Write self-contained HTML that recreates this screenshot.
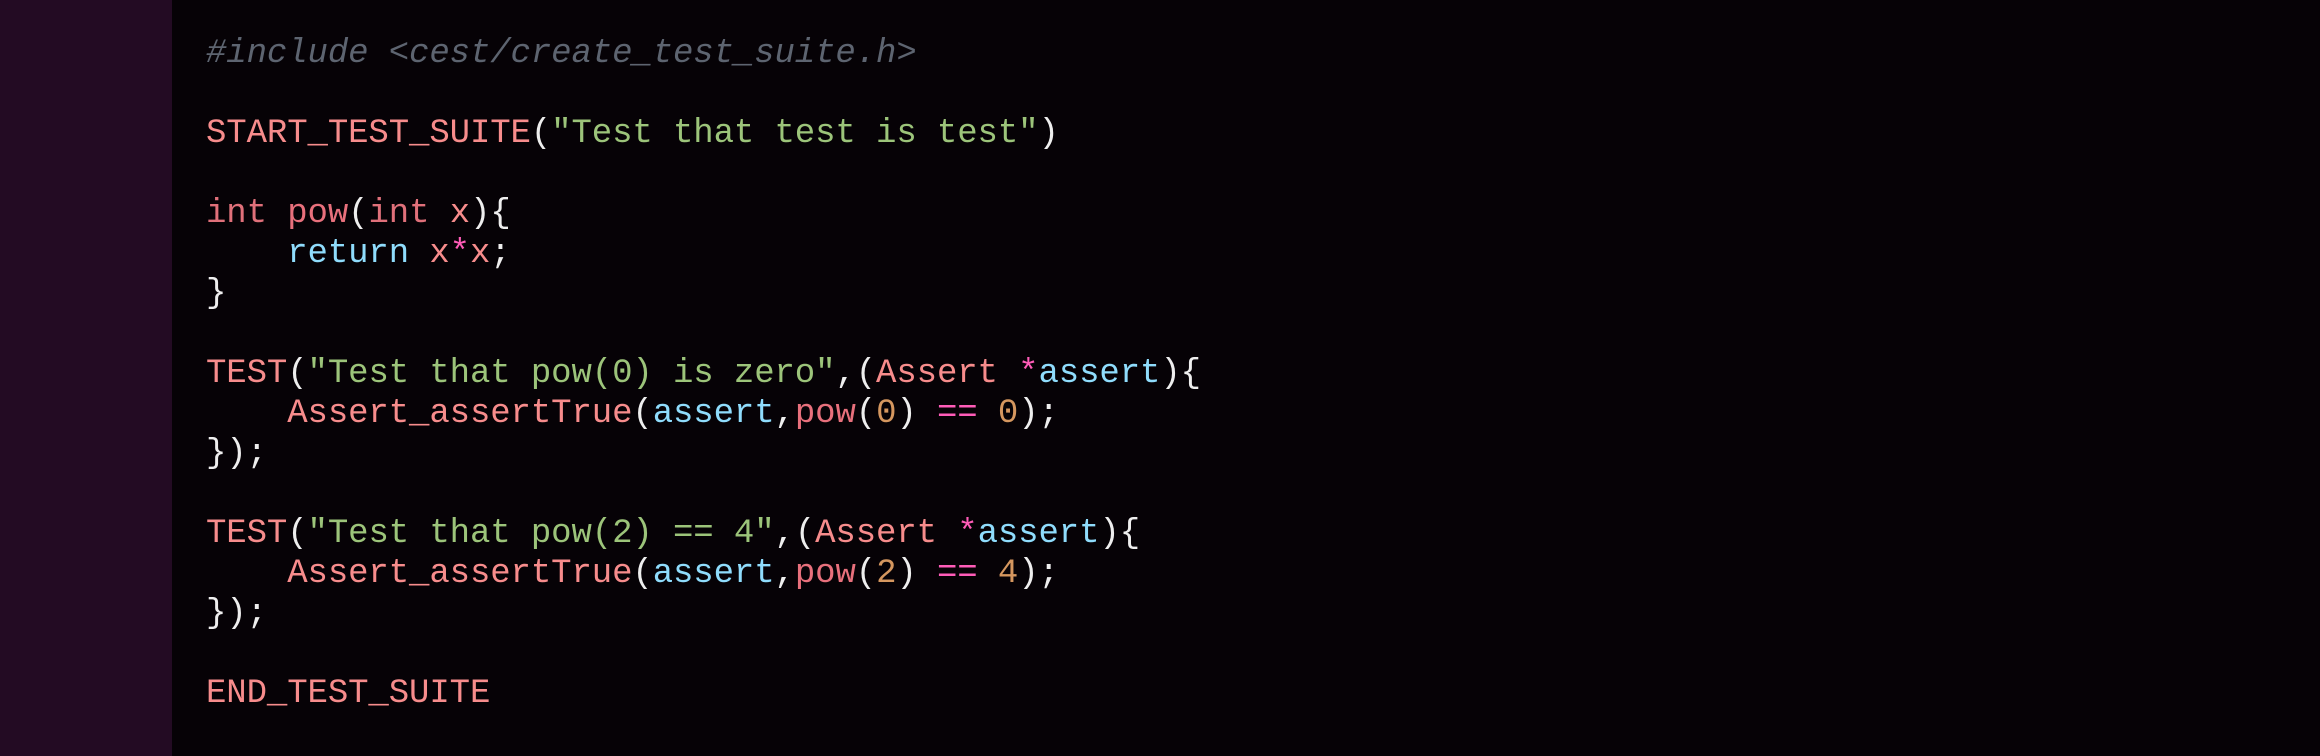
<!DOCTYPE html>
<html><head><meta charset="utf-8"><style>
html,body{margin:0;padding:0}
body{width:2320px;height:756px;background:#060206;position:relative;overflow:hidden}
.side{position:absolute;left:0;top:0;width:172px;height:756px;background:#230b23}
pre{position:absolute;left:206px;top:34px;margin:0;font-family:"Liberation Mono",monospace;font-size:34px;line-height:40px;color:#eeeeee;letter-spacing:-0.1px}
.c{color:#5d6470;font-style:italic}
.m{color:#f78c8c}
.s{color:#9cc47a}
.k{color:#e0707a}
.f{color:#e8707c}
.b{color:#8fdcfc}
.p{color:#ff5cb8}
.n{color:#d5975f}
</style></head><body>
<div class="side"></div>
<pre><span class="c">#include &lt;cest/create_test_suite.h&gt;</span>

<span class="m">START_TEST_SUITE</span>(<span class="s">"Test that test is test"</span>)

<span class="k">int</span> <span class="f">pow</span>(<span class="k">int</span> <span class="m">x</span>){
    <span class="b">return</span> <span class="m">x</span><span class="p">*</span><span class="m">x</span>;
}

<span class="m">TEST</span>(<span class="s">"Test that pow(0) is zero"</span>,(<span class="m">Assert</span> <span class="p">*</span><span class="b">assert</span>){
    <span class="m">Assert_assertTrue</span>(<span class="b">assert</span>,<span class="f">pow</span>(<span class="n">0</span>) <span class="p">==</span> <span class="n">0</span>);
});

<span class="m">TEST</span>(<span class="s">"Test that pow(2) == 4"</span>,(<span class="m">Assert</span> <span class="p">*</span><span class="b">assert</span>){
    <span class="m">Assert_assertTrue</span>(<span class="b">assert</span>,<span class="f">pow</span>(<span class="n">2</span>) <span class="p">==</span> <span class="n">4</span>);
});

<span class="m">END_TEST_SUITE</span></pre>
</body></html>
